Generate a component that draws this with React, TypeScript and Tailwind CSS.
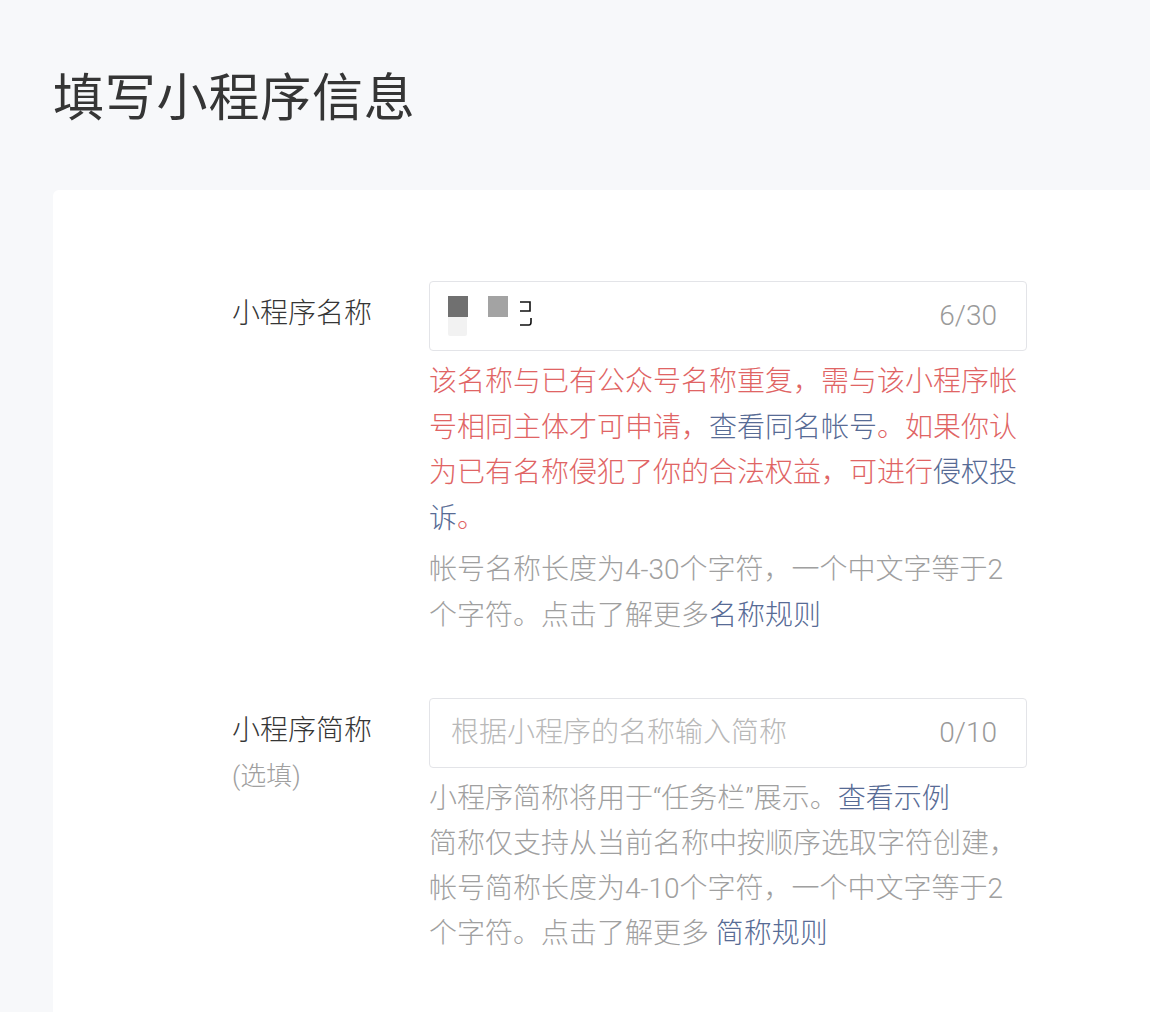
import React from "react";

const font = { fontFamily: 'Roboto, "Noto Sans CJK SC", sans-serif' };

export default function App() {
  return (
    <div
      className="min-h-[1012px] w-[1150px] overflow-hidden bg-[#f7f8fa] text-[#353535] font-light"
      style={font}
    >
      <div className="pl-[53px] pt-[68px]">
        <h1 className="text-[51px] leading-[62px] tracking-[0.8px] font-normal text-[#353535]">填写小程序信息</h1>
        <div className="mt-[60px] min-h-[830px] rounded-tl-[6px] bg-white pt-[91px] pl-[179px]">
          {/* Row 1 */}
          <div className="flex">
            <div className="w-[197px] shrink-0 pt-[10px] text-[28px] leading-[45.5px] text-[#353535]">
              小程序名称
            </div>
            <div className="w-[598px]">
              <div className="flex h-[70px] items-center rounded-[4px] border border-[#e3e4e8] pl-[18px] pr-[29px]">
                <div className="flex flex-1 items-start">
                  <div className="flex flex-col">
                    <div className="h-[21px] w-[20px] bg-[#707070]" />
                    <div className="h-[19px] w-[19px] rounded-b-[2px] bg-[#f2f2f2]" />
                  </div>
                  <div className="ml-[20px] h-[21px] w-[20px] bg-[#a3a3a3]" />
                  <svg className="ml-[11px] mt-[5px]" width="14" height="26" viewBox="0 0 14 26">
                    <path d="M1 1 H11 V10 H1" fill="none" stroke="#111" strokeWidth="1.6" />
                    <path d="M1 24 H10 Q12 24 12 21 V17" fill="none" stroke="#111" strokeWidth="1.6" />
                  </svg>
                </div>
                <span className="text-[28px] text-[#9a9a9a]">6/30</span>
              </div>
              <p className="mt-[8px] text-[28px] leading-[45.5px] text-[#e06464]">
                该名称与已有公众号名称重复，需与该小程序帐号相同主体才可申请，
                <span className="text-[#576b95]">查看同名帐号</span>。如果你认为已有名称侵犯了你的合法权益，可进行
                <span className="text-[#576b95]">侵权投诉</span>。
              </p>
              <p className="mt-[6px] text-[28px] leading-[45.5px] text-[#a0a0a0]">
                帐号名称长度为4-30个字符，一个中文字等于2个字符。点击了解更多
                <span className="text-[#576b95]">名称规则</span>
              </p>
            </div>
          </div>

          {/* Row 2 */}
          <div className="mt-[60px] flex">
            <div className="w-[197px] shrink-0 pt-[10px] text-[28px] leading-[45.5px]">
              <div className="text-[#353535]">小程序简称</div>
              <div className="text-[26px] text-[#a0a0a0]">(选填)</div>
            </div>
            <div className="w-[598px]">
              <div className="flex h-[70px] items-center rounded-[4px] border border-[#e3e4e8] pl-[21px] pr-[29px]">
                <span className="flex-1 text-[28px] text-[#b8b8b8]">根据小程序的名称输入简称</span>
                <span className="text-[28px] text-[#9a9a9a]">0/10</span>
              </div>
              <p className="mt-[8px] text-[28px] leading-[45px] text-[#a0a0a0]">
                小程序简称将用于“任务栏”展示。<span className="text-[#576b95]">查看示例</span>
                <br />
                简称仅支持从当前名称中按顺序选取字符创建，帐号简称长度为4-10个字符，一个中文字等于2个字符。点击了解更多{" "}
                <span className="text-[#576b95]">简称规则</span>
              </p>
            </div>
          </div>
        </div>
      </div>
    </div>
  );
}
